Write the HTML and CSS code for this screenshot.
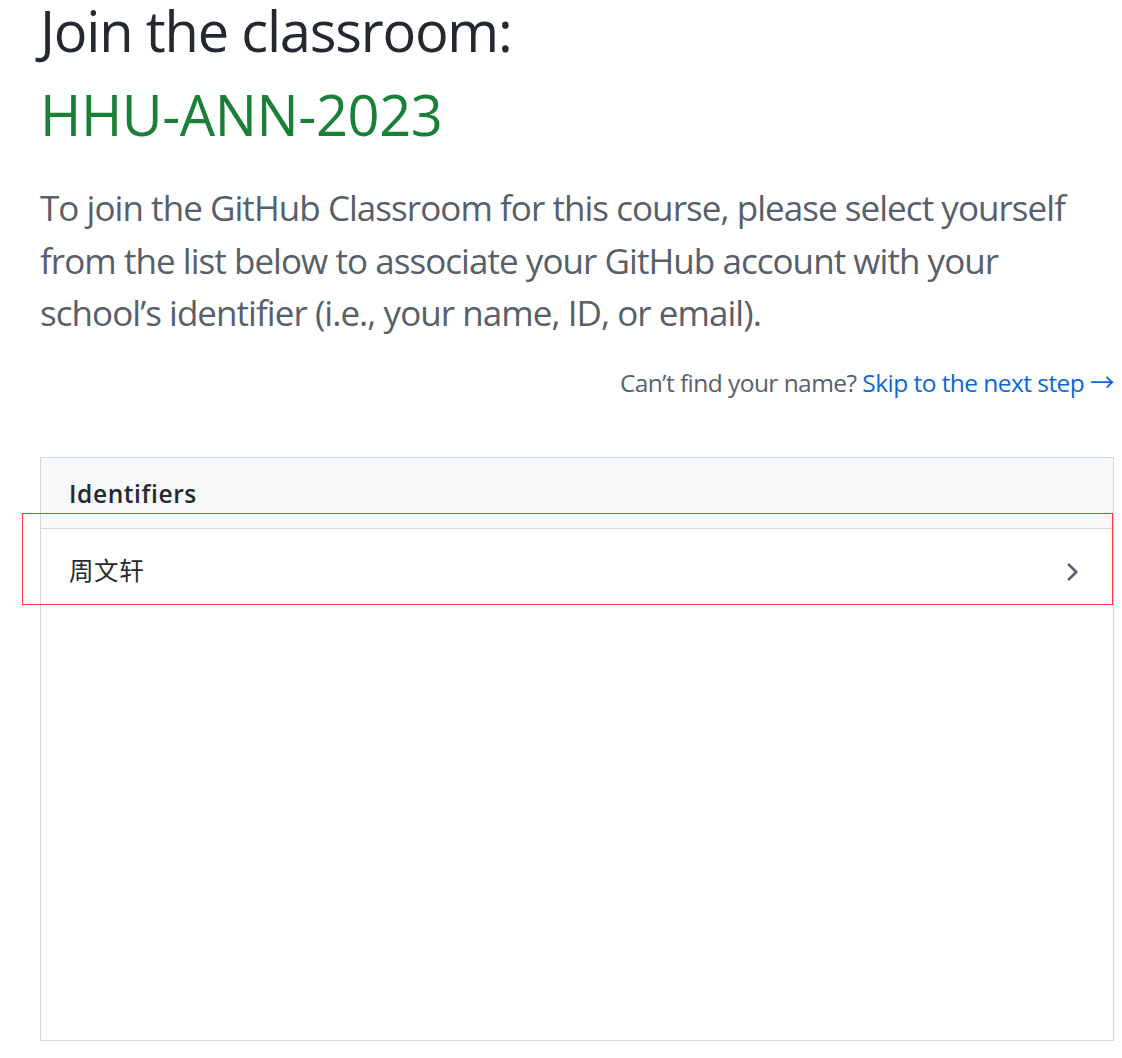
FILE: index.html
```html
<!DOCTYPE html>
<html lang="en">
<head>
<meta charset="utf-8">
<title>Join the classroom</title>
<link rel="stylesheet" href="styles.css">
</head>
<body>
<main class="page">
  <h1 class="title">
    <span class="title-line title-join">Join the classroom:</span>
    <span class="title-line title-name">HHU-ANN-2023</span>
  </h1>
  <p class="lead">To join the GitHub Classroom for this course, please select yourself from the list below to associate your GitHub account with your school’s identifier (i.e., your name, ID, or email).</p>
  <p class="skip">Can’t find your name? <a class="skip-link" href="#">Skip to the next step →</a></p>
  <section class="box">
    <div class="box-header">Identifiers</div>
    <div class="box-body">
      <a class="row" href="#">
        <span class="row-name">周文轩</span>
        <svg class="chevron" viewBox="0 0 16 16" width="28" height="28" aria-hidden="true"><path d="M6.22 3.22a.75.75 0 0 1 1.06 0l4.25 4.25a.75.75 0 0 1 0 1.06l-4.25 4.25a.751.751 0 0 1-1.042-.018.751.751 0 0 1-.018-1.042L9.94 8 6.22 4.28a.75.75 0 0 1 0-1.06Z"/></svg>
      </a>
      <div class="highlight"></div>
    </div>
  </section>
</main>
</body>
</html>
```
FILE: styles.css
```css
html, body {
  margin: 0;
  padding: 0;
  background: #ffffff;
}
body {
  font-family: "Open Sans", "Noto Sans", "Noto Sans CJK SC", sans-serif;
  color: #24292f;
}
.page {
  padding: 0 8px 0 40px;
}
.title {
  margin: -12px 0 0;
  font-size: 56px;
  font-weight: 400;
  line-height: 84px;
  color: #24292f;
}
.title-line {
  display: block;
}
.title-join {
  letter-spacing: -1.2px;
}
.title-name {
  color: #1a7f37;
  letter-spacing: -0.4px;
}
.lead {
  margin: 26px 0 0;
  font-size: 35px;
  line-height: 52.5px;
  letter-spacing: -0.95px;
  color: #57606a;
}
.skip {
  margin: 25px 0 0;
  text-align: right;
  font-size: 24.5px;
  line-height: 36.75px;
  letter-spacing: -0.55px;
  color: #57606a;
}
.skip-link {
  color: #0969da;
  text-decoration: none;
}
.box {
  margin-top: 56px;
  border: 1px solid #d0d7de;
  height: 584px;
  box-sizing: border-box;
}
.box-header {
  height: 70px;
  display: flex;
  align-items: center;
  padding: 0 28px;
  background: #f6f8fa;
  border-bottom: 1px solid #d0d7de;
  font-size: 24.5px;
  font-weight: 600;
  letter-spacing: 0.6px;
  color: #24292f;
}
.box-body {
  position: relative;
}
.row {
  display: flex;
  align-items: center;
  justify-content: space-between;
  padding: 28px 28px;
  height: 30px;
  color: #24292f;
  text-decoration: none;
}
.row-name {
  font-family: "Noto Sans CJK SC", sans-serif;
  font-size: 24.5px;
  letter-spacing: 0.6px;
  margin-bottom: 6px;
}
.chevron {
  fill: #57606a;
  display: block;
}
.highlight {
  position: absolute;
  left: -19px;
  right: 0;
  top: -16px;
  height: 92px;
  border: 1px solid #ff3b3b;
  box-sizing: border-box;
  pointer-events: none;
}
```
